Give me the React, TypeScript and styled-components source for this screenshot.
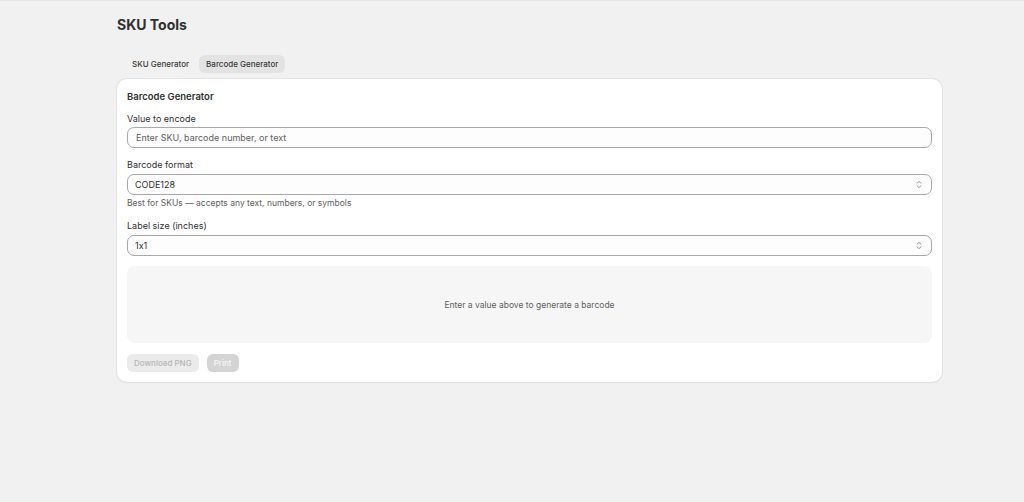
import { useState } from 'react';
import styled, { createGlobalStyle } from 'styled-components';

const GlobalStyle = createGlobalStyle`
  html, body {
    margin: 0;
    padding: 0;
    background: #f1f1f1;
    font-family: Inter, "Noto Sans", "Liberation Sans", sans-serif;
    font-feature-settings: "calt" 0;
    color: #303030;
  }
  * {
    box-sizing: border-box;
  }
`;

const Page = styled.div`
  width: 1024px;
  min-height: 502px;
  padding: 16px 0 0 117px;
  border-top: 1px solid #e6e6e6;
`;

const Title = styled.h1`
  margin: 0;
  font-size: 14px;
  font-weight: 700;
  line-height: 16px;
  color: #303030;
`;

const Tabs = styled.div`
  display: flex;
  gap: 3px;
  margin: 22px 0 6px 0;
  padding-left: 8px;
`;

const Tab = styled.button<{ $active?: boolean }>`
  border: none;
  height: 18px;
  padding: 0 7px;
  border-radius: 6px;
  font-family: inherit;
  font-feature-settings: "calt" 0;
  font-size: 8px;
  font-weight: 500;
  color: #3a3a3a;
  background: ${(p) => (p.$active ? '#e3e3e3' : 'transparent')};
  cursor: pointer;
`;

const Card = styled.div`
  width: 825px;
  background: #fff;
  border-radius: 10px;
  box-shadow: 0 0 0 1px #e3e3e3, 0 1px 1px rgba(0, 0, 0, 0.08);
  padding: 11px 10px 10px 10px;
  display: flex;
  flex-direction: column;
`;

const CardTitle = styled.h2`
  margin: 0 0 10px 0;
  font-size: 9.5px;
  font-weight: 600;
  line-height: 13px;
`;

const Field = styled.div<{ $space?: number }>`
  display: flex;
  flex-direction: column;
  margin-bottom: ${(p) => p.$space ?? 11}px;
`;

const Label = styled.label`
  font-size: 9px;
  line-height: 12px;
  margin-bottom: 2px;
  color: #303030;
`;

const Input = styled.input`
  height: 21px;
  border: 1px solid #a8a8a8;
  border-radius: 7px;
  padding: 0 8px;
  font-family: inherit;
  font-feature-settings: "calt" 0;
  font-size: 9px;
  color: #303030;
  background: #fdfdfd;
  outline: none;
  &::placeholder {
    color: #616161;
  }
`;

const SelectWrap = styled.div`
  position: relative;
  display: flex;
  margin-top: 1px;
`;

const Select = styled.select`
  flex: 1;
  height: 21px;
  border: 1px solid #a8a8a8;
  border-radius: 7px;
  padding: 0 7px;
  font-family: inherit;
  font-feature-settings: "calt" 0;
  font-size: 9px;
  color: #303030;
  background: #fdfdfd;
  appearance: none;
  outline: none;
`;

const Chevron = styled.svg`
  position: absolute;
  right: 9px;
  top: 6px;
  pointer-events: none;
`;

const Help = styled.div`
  font-size: 8.5px;
  line-height: 12px;
  color: #616161;
  margin-top: 2px;
`;

const Preview = styled.div`
  height: 77px;
  border-radius: 8px;
  background: #f6f6f7;
  display: flex;
  align-items: center;
  justify-content: center;
  font-size: 8.5px;
  color: #616161;
`;

const Actions = styled.div`
  display: flex;
  gap: 8px;
  margin-top: 11px;
`;

const Button = styled.button<{ $variant?: 'primary' }>`
  height: 18px;
  padding: 0 7px;
  border: none;
  border-radius: 6px;
  font-family: inherit;
  font-size: 8px;
  font-weight: 500;
  background: ${(p) => (p.$variant === 'primary' ? '#d4d4d4' : '#ebebeb')};
  color: ${(p) => (p.$variant === 'primary' ? '#f7f7f7' : '#b5b5b5')};
`;

const SelectChevron = () => (
  <Chevron width="8" height="9" viewBox="0 0 8 9" fill="none">
    <path d="M2 3.2 L4 1.4 L6 3.2" stroke="#8a8a8a" strokeWidth="0.9" strokeLinecap="round" strokeLinejoin="round" />
    <path d="M2 5.8 L4 7.6 L6 5.8" stroke="#8a8a8a" strokeWidth="0.9" strokeLinecap="round" strokeLinejoin="round" />
  </Chevron>
);

const App = () => {
  const [tab, setTab] = useState<'sku' | 'barcode'>('barcode');
  const [value, setValue] = useState('');

  return (
    <>
      <GlobalStyle />
      <Page>
        <Title>SKU Tools</Title>
        <Tabs>
          <Tab $active={tab === 'sku'} onClick={() => setTab('sku')}>
            SKU Generator
          </Tab>
          <Tab $active={tab === 'barcode'} onClick={() => setTab('barcode')}>
            Barcode Generator
          </Tab>
        </Tabs>
        <Card>
          <CardTitle>Barcode Generator</CardTitle>
          <Field>
            <Label>Value to encode</Label>
            <Input
              placeholder="Enter SKU, barcode number, or text"
              value={value}
              onChange={(e) => setValue(e.target.value)}
            />
          </Field>
          <Field>
            <Label>Barcode format</Label>
            <SelectWrap>
              <Select defaultValue="CODE128">
                <option>CODE128</option>
                <option>EAN13</option>
                <option>UPC</option>
              </Select>
              <SelectChevron />
            </SelectWrap>
            <Help>Best for SKUs — accepts any text, numbers, or symbols</Help>
          </Field>
          <Field $space={10}>
            <Label>Label size (inches)</Label>
            <SelectWrap>
              <Select defaultValue="1x1">
                <option>1x1</option>
                <option>2x1</option>
              </Select>
              <SelectChevron />
            </SelectWrap>
          </Field>
          <Preview>Enter a value above to generate a barcode</Preview>
          <Actions>
            <Button disabled>Download PNG</Button>
            <Button $variant="primary" disabled>
              Print
            </Button>
          </Actions>
        </Card>
      </Page>
    </>
  );
};

export default App;
